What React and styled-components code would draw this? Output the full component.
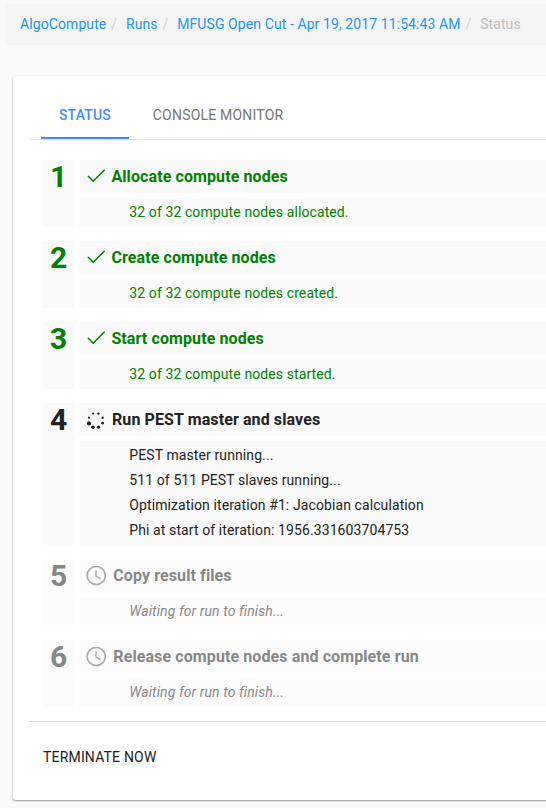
import React, { Component } from 'react';
import styled, { createGlobalStyle } from 'styled-components';

const GlobalStyle = createGlobalStyle`
  html, body {
    margin: 0;
    background-color: #fafafa;
    overflow: hidden;
  }

  body {
    font-family: Roboto, "Liberation Sans", sans-serif;
    font-size: 14px;
    color: #212121;
  }
`;

const Page = styled.div`
  box-sizing: border-box;
  height: 808px;
  padding: 4px 0 0 5px;
`;

const Breadcrumb = styled.nav`
  display: flex;
  align-items: center;
  height: 41px;
  padding-left: 15px;
  background-color: #f5f5f5;
  white-space: nowrap;
`;

const Crumb = styled.a`
  line-height: 20px;
  margin-top: -1px;
  letter-spacing: 0.09px;
  color: ${props => props.$active ? '#bdbdbd' : '#2196f3'};
`;

const Separator = styled.span`
  width: 19.6px;
  margin-top: -1px;
  padding-left: 5px;
  box-sizing: border-box;
  line-height: 20px;
  color: #ccc;
`;

const Card = styled.div`
  box-sizing: border-box;
  height: 724px;
  margin: 31px -20px 0 8px;
  padding: 16px 0 0 16px;
  border-radius: 2px;
  background-color: #fff;
  box-shadow: 0 1px 2px rgba(0, 0, 0, 0.4), 0 0 1px rgba(0, 0, 0, 0.1);
`;

const Tabs = styled.div`
  box-sizing: border-box;
  display: flex;
  height: 48px;
  padding-left: 12px;
  border-bottom: 1px solid #e0e0e0;
`;

const Tab = styled.div`
  box-sizing: border-box;
  height: 47px;
  padding: 0 18px;
  margin-right: 6px;
  line-height: 46px;
  font-weight: ${props => props.$active ? 500 : 400};
  letter-spacing: ${props => props.$active ? 0.14 : 0.2}px;
  color: ${props => props.$active ? '#448aff' : '#757575'};
  border-bottom: 2px solid ${props => props.$active ? '#448aff' : 'transparent'};
`;

const Steps = styled.div`
  display: flex;
  flex-direction: column;
  gap: 14px;
  padding: 20px 0 14px 14px;
  border-bottom: 1px solid #e0e0e0;
`;

const StepRow = styled.div`
  display: grid;
  grid-template-columns: 31px 1fr;
  column-gap: 5px;
  color: ${props => props.$status === 'done' ? 'green' : '#212121'};
  opacity: ${props => props.$status === 'waiting' ? 0.54 : 1};
`;

const StepNumber = styled.div`
  background-color: #fafafa;
  font-size: 30px;
  font-weight: 700;
  line-height: 33px;
  text-align: center;
`;

const StepBody = styled.div`
  display: flex;
  flex-direction: column;
  gap: 5px;
`;

const StepHeader = styled.div`
  display: flex;
  align-items: center;
  height: 33px;
  padding-left: 7px;
  background-color: #fafafa;
`;

const StepTitle = styled.div`
  margin-left: ${props => props.$offset}px;
  font-size: 16px;
  font-weight: 700;
  line-height: 33px;
  letter-spacing: 0.1px;
`;

const StepDetails = styled.div`
  padding: 2px 0 2px 50.3px;
  background-color: #fafafa;
  font-style: ${props => props.$status === 'waiting' ? 'italic' : 'normal'};
`;

const DetailLine = styled.div`
  line-height: 25px;
  letter-spacing: 0.1px;
`;

const Terminate = styled.button`
  display: block;
  margin: 17px 0 0 14px;
  padding: 0;
  border: none;
  background: none;
  color: #212121;
  font-family: inherit;
  font-size: 14px;
  font-weight: 400;
  line-height: 36px;
  letter-spacing: 0.18px;
`;

const Icon = styled.svg`
  display: block;
  flex: none;
`;

const crumbs = ['AlgoCompute', 'Runs', 'MFUSG Open Cut - Apr 19, 2017 11:54:43 AM', 'Status'];

const steps = [
  { title: 'Allocate compute nodes', status: 'done', details: ['32 of 32 compute nodes allocated.'] },
  { title: 'Create compute nodes', status: 'done', details: ['32 of 32 compute nodes created.'] },
  { title: 'Start compute nodes', status: 'done', details: ['32 of 32 compute nodes started.'] },
  {
    title: 'Run PEST master and slaves',
    status: 'running',
    details: [
      'PEST master running...',
      '511 of 511 PEST slaves running...',
      'Optimization iteration #1: Jacobian calculation',
      'Phi at start of iteration: 1956.331603704753'
    ]
  },
  { title: 'Copy result files', status: 'waiting', details: ['Waiting for run to finish...'] },
  { title: 'Release compute nodes and complete run', status: 'waiting', details: ['Waiting for run to finish...'] }
];

const titleOffsets = { done: 5.4, running: 6, waiting: 7.3 };

// x, y, radius
const dots = [
  [7.1, 3.6, 1.1],
  [12.5, 3.6, 1.2],
  [16.6, 7.7, 1.2],
  [16.6, 13.2, 1.4],
  [12.5, 17.2, 1.6],
  [7.1, 17.3, 1.8],
  [3, 13.4, 2.1],
  [3, 7.7, 1.1]
];

function StatusIcon(props) {
  if (props.status === 'done') {
    return (
      <Icon width="20" height="20" viewBox="0 0 20 20">
        <path d="M2 9 L7.2 14.2 L18.6 2.8" fill="none" stroke="green" strokeWidth="1.6" />
      </Icon>
    );
  }
  if (props.status === 'running') {
    return (
      <Icon width="20" height="20" viewBox="0 0 20 20">
        {dots.map((dot, i) => {
          return (<circle key={i} cx={dot[0]} cy={dot[1]} r={dot[2]} fill="#212121" />)
        })}
      </Icon>
    );
  }
  return (
    <Icon width="20" height="20" viewBox="0 0 20 20" fill="none" stroke="#666">
      <circle cx="10.2" cy="9.5" r="9.1" strokeWidth="1.6" />
      <path d="M10 4.3 V10 L14.5 12.6" strokeWidth="1.4" />
    </Icon>
  );
}

function Step(props) {
  const { title, status, details } = props.step;

  return (
    <StepRow $status={status}>
      <StepNumber>{props.number}</StepNumber>
      <StepBody>
        <StepHeader>
          <StatusIcon status={status} />
          <StepTitle $offset={titleOffsets[status]}>{title}</StepTitle>
        </StepHeader>
        <StepDetails $status={status}>
          {details.map((line, i) => {
            return (<DetailLine key={i}>{line}</DetailLine>)
          })}
        </StepDetails>
      </StepBody>
    </StepRow>
  );
}

class App extends Component {
  render() {
    return (
      <Page>
        <GlobalStyle />
        <Breadcrumb>
          {crumbs.map((name, i) => {
            const last = i === crumbs.length - 1;
            return (
              <React.Fragment key={name}>
                <Crumb $active={last}>{name}</Crumb>
                {!last && <Separator>/</Separator>}
              </React.Fragment>
            )
          })}
        </Breadcrumb>
        <Card>
          <Tabs>
            <Tab $active>STATUS</Tab>
            <Tab>CONSOLE MONITOR</Tab>
          </Tabs>
          <Steps>
            {steps.map((step, i) => {
              return (<Step key={i} number={i + 1} step={step} />)
            })}
          </Steps>
          <Terminate>TERMINATE NOW</Terminate>
        </Card>
      </Page>
    );
  }
}

export default App;
